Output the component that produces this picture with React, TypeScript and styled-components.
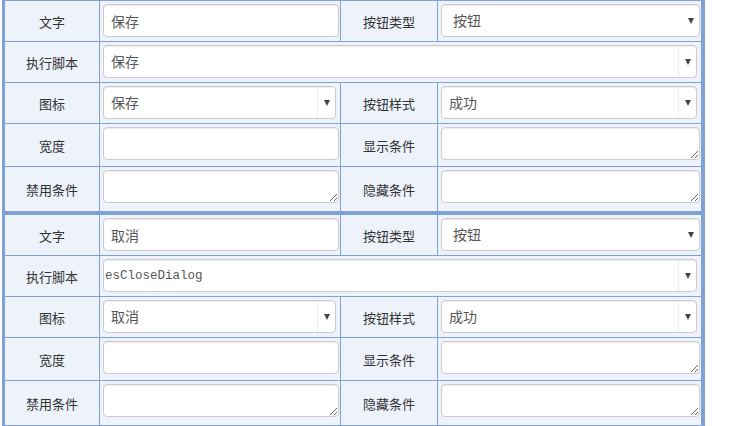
import React, { FC } from "react";
import styled, { createGlobalStyle } from "styled-components";

const GlobalStyle = createGlobalStyle`
    body {
        margin: 0;
        background: #fff;
        font-family: "Liberation Sans", "Noto Sans CJK SC", sans-serif;
    }
`;

const LINE = "#7fa1d6";
const CELL = "#edf2fb";

const Frame = styled.div`
    margin-left: 2px;
    width: 697px;
    border-left: 3px solid ${LINE};
    border-right: 3px solid ${LINE};
    background: ${LINE};
`;

const Group = styled.div<{ $first?: boolean; $last?: boolean }>`
    display: grid;
    grid-template-columns: 94px 240px 96px 263px;
    grid-template-rows: 40px 40px 40px 42px 44px;
    gap: 1px;
    padding-top: ${({ $first }) => ($first ? "1px" : "4px")};
    padding-bottom: ${({ $last }) => ($last ? "1px" : "0")};
`;

const Label = styled.div`
    background: ${CELL};
    display: flex;
    align-items: center;
    justify-content: center;
    font-size: 13px;
    color: #333;
`;

const Field = styled.div<{ $span?: number }>`
    background: ${CELL};
    padding: 3px 1px 0 3px;
    grid-column: ${({ $span }) => ($span ? `span ${$span}` : "auto")};
    min-width: 0;
`;

const boxBase = `
    box-sizing: border-box;
    width: 100%;
    height: 33px;
    border: 1px solid #ccc;
    border-radius: 4px;
    background: #fff;
    box-shadow: inset 0 1px 1px rgba(0, 0, 0, 0.075);
    color: #555;
    font-size: 14px;
    font-family: "Liberation Sans", "Noto Sans CJK SC", sans-serif;
    outline: none;
    margin: 0;
`;

const TextInput = styled.input`
    ${boxBase}
    padding: 0 7px;
    display: block;
`;

const TextArea = styled.textarea`
    ${boxBase}
    padding: 6px 7px;
    display: block;
`;

const SelectWrap = styled.div<{ $seg?: boolean }>`
    position: relative;
    width: ${({ $seg }) => ($seg ? "calc(100% - 3px)" : "100%")};
`;

const Select = styled.select<{ $seg?: boolean; $mono?: boolean }>`
    ${boxBase}
    appearance: none;
    display: block;
    padding: 0 20px 0 ${({ $seg, $mono }) => ($mono ? "1px" : $seg ? "7px" : "11px")};
    font-family: ${({ $mono }) =>
        $mono ? `"Liberation Mono", monospace` : `"Liberation Sans", "Noto Sans CJK SC", sans-serif`};
    font-size: ${({ $mono }) => ($mono ? "12.5px" : "14px")};
`;

const ArrowBox = styled.span<{ $seg?: boolean }>`
    position: absolute;
    top: 1px;
    bottom: 1px;
    right: 1px;
    width: ${({ $seg }) => ($seg ? "17px" : "16px")};
    border-left: ${({ $seg }) => ($seg ? "1px solid #ececec" : "none")};
    display: flex;
    align-items: center;
    justify-content: center;
    pointer-events: none;
    &::after {
        content: "";
        border-left: 3.5px solid transparent;
        border-right: 3.5px solid transparent;
        border-top: 6px solid #444;
    }
`;

type SelectProps = Readonly<{ value: string; seg?: boolean; mono?: boolean }>;

const DropDown: FC<SelectProps> = ({ value, seg, mono }) => (
    <SelectWrap $seg={seg}>
        <Select $seg={seg} $mono={mono} defaultValue={value}>
            <option>{value}</option>
        </Select>
        <ArrowBox $seg={seg} />
    </SelectWrap>
);

type ButtonConfig = Readonly<{
    text: string;
    type: string;
    script: string;
    icon: string;
    style: string;
    monoScript?: boolean;
}>;

const buttons: ButtonConfig[] = [
    { text: "保存", type: "按钮", script: "保存", icon: "保存", style: "成功" },
    { text: "取消", type: "按钮", script: "esCloseDialog", icon: "取消", style: "成功", monoScript: true },
];

const ButtonGroup: FC<{ cfg: ButtonConfig; first?: boolean; last?: boolean }> = ({ cfg, first, last }) => (
    <Group $first={first} $last={last}>
        <Label>文字</Label>
        <Field><TextInput defaultValue={cfg.text} /></Field>
        <Label>按钮类型</Label>
        <Field><DropDown value={cfg.type} /></Field>

        <Label>执行脚本</Label>
        <Field $span={3}><DropDown value={cfg.script} seg mono={cfg.monoScript} /></Field>

        <Label>图标</Label>
        <Field><DropDown value={cfg.icon} seg /></Field>
        <Label>按钮样式</Label>
        <Field><DropDown value={cfg.style} seg /></Field>

        <Label>宽度</Label>
        <Field><TextInput /></Field>
        <Label>显示条件</Label>
        <Field><TextArea /></Field>

        <Label>禁用条件</Label>
        <Field><TextArea /></Field>
        <Label>隐藏条件</Label>
        <Field><TextArea /></Field>
    </Group>
);

export default function App() {
    return (
        <>
            <GlobalStyle />
            <Frame>
                {buttons.map((b, i) => (
                    <ButtonGroup key={i} cfg={b} first={i === 0} last={i === buttons.length - 1} />
                ))}
            </Frame>
        </>
    );
}
